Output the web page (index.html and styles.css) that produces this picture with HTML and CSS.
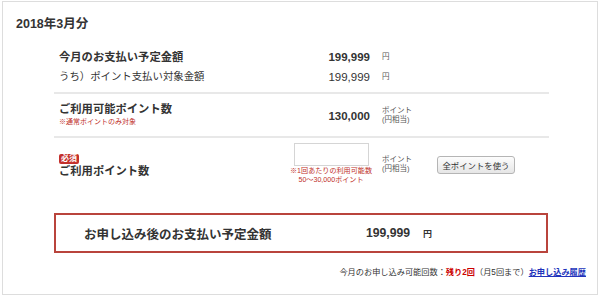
FILE: index.html
```html
<!DOCTYPE html>
<html lang="ja">
<head>
  <meta charset="UTF-8" />
  <meta name="viewport" content="width=device-width, initial-scale=1.0" />
  <title>ポイント支払い</title>
  <link rel="stylesheet" href="styles.css">
</head>
<body>
  <div class="panel">
    <h2 class="month">2018年3月分</h2>

    <div class="table">
      <div class="row row-first">
        <div class="label strong">今月のお支払い予定金額</div>
        <div class="value strong">199,999</div>
        <div class="unit">円</div>
        <div></div>
        <div class="label sub">うち）ポイント支払い対象金額</div>
        <div class="value">199,999</div>
        <div class="unit">円</div>
        <div></div>
      </div>

      <div class="row row-points">
        <div class="label">
          <div class="strong">ご利用可能ポイント数</div>
          <div class="note">※通常ポイントのみ対象</div>
        </div>
        <div class="value strong big">130,000</div>
        <div class="unit">ポイント<br>(円相当)</div>
        <div></div>
      </div>

      <div class="row row-use">
        <div class="label">
          <span class="badge">必須</span>
          <div class="strong">ご利用ポイント数</div>
        </div>
        <div class="value input-cell">
          <input type="text" class="point-input" />
          <div class="note center">※1回あたりの利用可能数<br>50〜30,000ポイント</div>
        </div>
        <div class="unit">ポイント<br>(円相当)</div>
        <div><button class="all-btn">全ポイントを使う</button></div>
      </div>
    </div>

    <div class="total">
      <div class="total-label">お申し込み後のお支払い予定金額</div>
      <div class="total-value">199,999</div>
      <div class="total-unit">円</div>
    </div>

    <p class="footer">
      今月のお申し込み可能回数：<span class="left">残り2回</span>（月5回まで）<a href="#">お申し込み履歴</a>
    </p>
  </div>
</body>
</html>
```

FILE: styles.css
```css
body {
  margin: 0;
  background-color: #fff;
  color: #333;
  font-family: "Liberation Sans", "Noto Sans CJK JP", sans-serif;
}

.panel {
  margin: 1px 0 0 2px;
  width: 594px;
  height: 292px;
  border: 1px solid #ddd;
}

.month {
  margin: 0;
  padding: 14px 0 0 13px;
  font-size: 12.5px;
  line-height: 16px;
  font-weight: bold;
}

.table {
  margin: 8px 0 0 51px;
  width: 495px;
}

.row {
  display: grid;
  grid-template-columns: 236px 80px 67px auto;
  align-items: center;
  border-bottom: 2px solid #e8e8e8;
}

.row-first {
  padding: 7px 0 5px;
  line-height: 20px;
}

.row-points {
  padding: 8px 0;
}

.row-use {
  padding: 5px 0;
  border-bottom: none;
}

.label {
  padding-left: 5px;
  font-size: 11.3px;
  line-height: 14px;
}

.row-first .label {
  line-height: 20px;
}

.strong {
  font-weight: bold;
}

.sub {
  font-size: 10.4px;
}

.value {
  text-align: right;
  font-size: 11.5px;
}

.big {
  padding-top: 2px;
}

.unit {
  padding-left: 12px;
  font-size: 7.5px;
  line-height: 9px;
  color: #555;
}

.row-first .unit {
  line-height: 20px;
}

.note {
  color: #c0302b;
  font-size: 7px;
  line-height: 12px;
}

.note.center {
  text-align: center;
  line-height: 9px;
  font-size: 7.1px;
  margin-right: -2px;
  white-space: nowrap;
}

.input-cell {
  display: flex;
  flex-direction: column;
  align-items: flex-end;
}

.point-input {
  box-sizing: border-box;
  width: 75px;
  height: 23px;
  margin: 0 1px 1px 0;
  border: 1px solid #d5d5d5;
  background: #fff;
}

.badge {
  display: inline-block;
  background-color: #c4302b;
  color: #fff;
  font-size: 8px;
  line-height: 10px;
  font-weight: bold;
  padding: 0 2px;
  border-radius: 2px;
}

.all-btn {
  margin-left: 0;
  width: 78px;
  height: 18px;
  padding: 0;
  font-family: inherit;
  font-size: 8.4px;
  color: #333;
  background: linear-gradient(#fdfdfd, #e6e6e6);
  border: 1px solid #b5b5b5;
  border-radius: 3px;
  cursor: pointer;
}

.total {
  display: flex;
  align-items: center;
  box-sizing: border-box;
  margin: 23px 0 0 51px;
  width: 494px;
  height: 40px;
  padding-left: 28px;
  border: 2px solid #b9443c;
  font-weight: bold;
}

.total-label {
  width: 250px;
  font-size: 12.5px;
}

.total-value {
  width: 76px;
  text-align: right;
  font-size: 12.2px;
}

.total-unit {
  padding-left: 13px;
  font-size: 9px;
}

.footer {
  margin: 14px 11px 0 0;
  text-align: right;
  font-size: 8.2px;
  line-height: 12px;
}

.left {
  color: #cc0000;
  font-weight: bold;
}

.footer a {
  color: #2233bb;
  font-weight: bold;
}
```
